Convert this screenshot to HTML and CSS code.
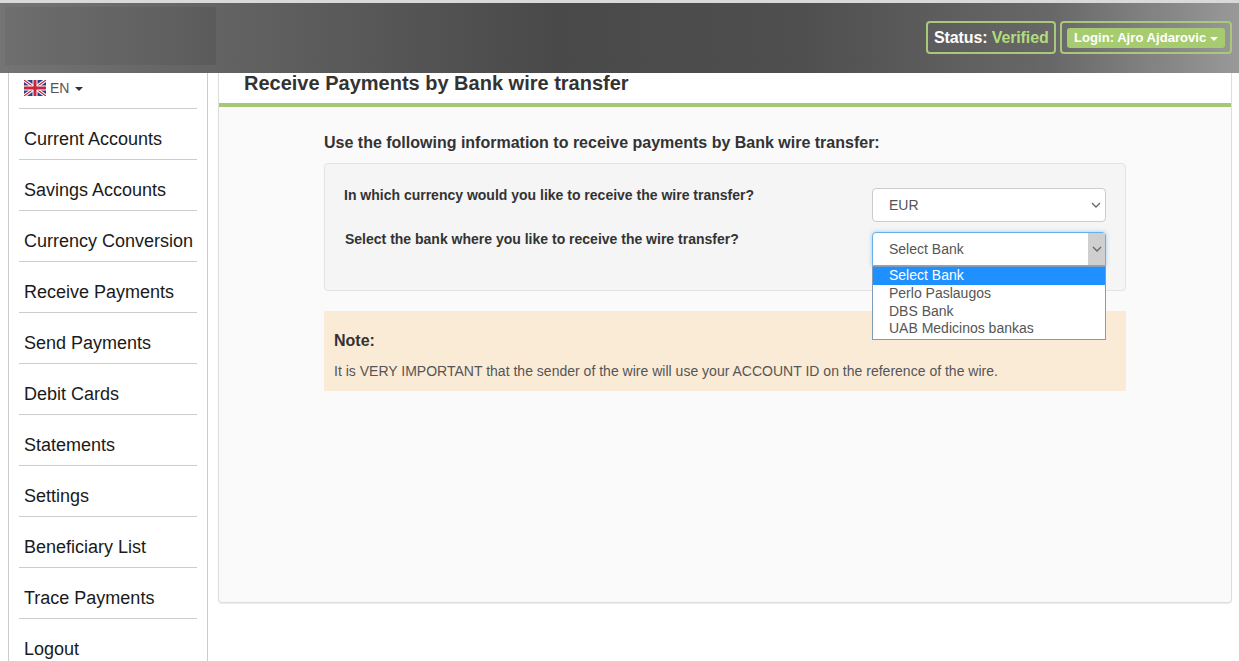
FILE: index.html
```html
<!DOCTYPE html>
<html lang="en">
<head>
<meta charset="utf-8">
<title>Receive Payments by Bank wire transfer</title>
<link rel="stylesheet" href="styles.css">
</head>
<body>
<header class="topbar">
  <div class="logo"></div>
  <div class="top-actions">
    <div class="status">Status: <span class="verified">Verified</span></div>
    <div class="login-box"><span class="login-btn">Login: Ajro Ajdarovic <i class="caret caret-white"></i></span></div>
  </div>
</header>
<div class="layout">
  <nav class="sidebar">
    <div class="lang">
      <svg class="flag" width="22" height="16" viewBox="0 0 22 16">
        <rect width="22" height="16" fill="#2b3f87"/>
        <path d="M0 0L22 16M22 0L0 16" stroke="#fff" stroke-width="3.4"/>
        <path d="M0 0L22 16M22 0L0 16" stroke="#c8253c" stroke-width="1.2"/>
        <path d="M11 0V16M0 8H22" stroke="#fff" stroke-width="5"/>
        <path d="M11 0V16M0 8H22" stroke="#c8253c" stroke-width="3"/>
      </svg>
      <span>EN</span><i class="caret"></i>
    </div>
    <a class="nav-item">Current Accounts</a>
    <a class="nav-item">Savings Accounts</a>
    <a class="nav-item">Currency Conversion</a>
    <a class="nav-item">Receive Payments</a>
    <a class="nav-item">Send Payments</a>
    <a class="nav-item">Debit Cards</a>
    <a class="nav-item">Statements</a>
    <a class="nav-item">Settings</a>
    <a class="nav-item">Beneficiary List</a>
    <a class="nav-item">Trace Payments</a>
    <a class="nav-item">Logout</a>
  </nav>
  <main class="panel">
    <h1 class="panel-title">Receive Payments by Bank wire transfer</h1>
    <div class="content">
      <h2 class="intro">Use the following information to receive payments by Bank wire transfer:</h2>
      <section class="well">
        <div class="form-row">
          <label class="row-label">In which currency would you like to receive the wire transfer?</label>
          <div class="select">EUR
            <svg class="chevron" width="10" height="6" viewBox="0 0 10 6"><path d="M1 1l4 4 4-4" fill="none" stroke="#666" stroke-width="1.3"/></svg>
          </div>
        </div>
        <div class="form-row form-row-bank">
          <label class="row-label row-label-bank">Select the bank where you like to receive the wire transfer?</label>
          <div class="select select-open">Select Bank
            <span class="arrow-zone"><svg width="10" height="6" viewBox="0 0 10 6"><path d="M1 1l4 4 4-4" fill="none" stroke="#666" stroke-width="1.3"/></svg></span>
            <ul class="dropdown">
              <li class="option option-active">Select Bank</li>
              <li class="option">Perlo Paslaugos</li>
              <li class="option">DBS Bank</li>
              <li class="option">UAB Medicinos bankas</li>
            </ul>
          </div>
        </div>
      </section>
      <section class="note">
        <h3 class="note-title">Note:</h3>
        <p class="note-text">It is VERY IMPORTANT that the sender of the wire will use your ACCOUNT ID on the reference of the wire.</p>
      </section>
    </div>
  </main>
</div>
</body>
</html>
```
FILE: styles.css
```css
* { box-sizing: border-box; }
html, body { margin: 0; height: 661px; overflow: hidden; background: #fff; }
body { font-family: "Liberation Sans", Arial, sans-serif; color: #333; position: relative; }

.topbar {
  position: absolute; top: 3px; left: 0; right: 0; height: 70px; z-index: 5;
  display: flex; justify-content: space-between; align-items: flex-start;
  background: linear-gradient(90deg, #707070 0%, #5c5c5c 20%, #444 45%, #4a4a4a 65%, #646464 85%, #969696 100%);
  box-shadow: 0 -3px 0 #d8d8d8;
  opacity: .97;
}
.logo { width: 211px; height: 58px; margin: 4px 0 0 5px; background: linear-gradient(90deg, #6a6a6a, #565656); }
.top-actions { display: flex; gap: 4px; margin: 18px 7px 0 0; }
.status {
  height: 33px; width: 130px; padding-left: 6px; border: 2px solid #a6c776; border-radius: 4px;
  font-size: 16px; font-weight: bold; line-height: 29px; color: #fff; white-space: nowrap; letter-spacing: -.12px;
}
.verified { color: #afdc78; }
.login-box { height: 33px; width: 172px; padding: 5px 5px; border: 2px solid #a6c776; border-radius: 4px; }
.login-btn {
  display: block; height: 20px; padding-left: 7px; border-radius: 3px; background: #a5cb6c;
  font-size: 13px; font-weight: bold; line-height: 20px; color: #fff; white-space: nowrap; letter-spacing: .05px;
}
.caret {
  display: inline-block; width: 0; height: 0; margin-left: 6px; vertical-align: middle;
  border-top: 4px solid #333; border-left: 4px solid transparent; border-right: 4px solid transparent;
}
.caret-white { border-top-color: #fff; margin-left: 0; }

.layout { display: flex; align-items: flex-start; padding-left: 8px; padding-top: 58px; height: 661px; }

.sidebar {
  width: 200px; height: 596px; flex: none; padding: 0 10px; margin: 7px 10px 0 0;
  background: #fff; border-left: 1px solid #ccc; border-right: 1px solid #ccc;
}
.lang {
  height: 44px; padding: 15px 0 0 5px; border-bottom: 1px solid #ccc;
  display: flex; align-items: flex-start; font-size: 14px; color: #555; line-height: 16px;
}
.flag { margin-right: 4px; flex: none; }
.lang .caret { margin: 7px 0 0 6px; }
.nav-item {
  display: block; height: 51px; padding: 19px 0 0 5px; border-bottom: 1px solid #ccc;
  font-size: 18px; line-height: 22px; color: #1a1a1a; white-space: nowrap;
}
.nav-item:last-child { border-bottom: 0; }

.panel {
  width: 1014px; height: 545px; background: #fafafa; border: 1px solid #ddd; border-radius: 4px;
  box-shadow: 0 1px 1px rgba(0,0,0,.08);
}
.panel-title {
  height: 48px; margin: 0; padding: 13px 0 0 25px; background: #fff; border-bottom: 4px solid #a6c776;
  font-size: 20px; font-weight: bold; line-height: 23px; color: #333;
}
.content { padding: 26px 105px 0; }
.intro { margin: 0 0 10px; font-size: 16px; font-weight: bold; line-height: 20px; color: #333; }
.well {
  height: 128px; padding: 24px 19px 0; background: #f5f5f5; border: 1px solid #e3e3e3; border-radius: 4px;
}
.form-row { display: flex; justify-content: space-between; align-items: flex-start; height: 44px; }
.row-label { font-size: 14px; font-weight: bold; line-height: 16px; color: #333; margin-top: -1px; }
.row-label-bank { margin: -1px 0 0 1px; }
.select {
  position: relative; flex: none; width: 234px; height: 34px; padding-left: 16px;
  background: #fff; border: 1px solid #ccc; border-radius: 4px;
  font-size: 14px; line-height: 32px; color: #555;
}
.chevron { position: absolute; right: 4px; top: 13px; }
.select-open { border-color: #66afe9; box-shadow: 0 0 4px rgba(102,175,233,.6); border-radius: 4px 4px 0 0; }
.arrow-zone {
  position: absolute; right: 0; top: 0; bottom: 0; width: 17px; background: #cfcfcf;
  display: flex; align-items: center; justify-content: center;
}
.dropdown {
  position: absolute; left: -1px; right: -1px; top: 33px; z-index: 3; margin: 0; padding: 0;
  list-style: none; background: #fff; border: 1px solid #7f9db9; height: 74px;
}
.option { height: 17.5px; padding-left: 16px; font-size: 14px; line-height: 17px; color: #555; }
.option-active { height: 18px; line-height: 17.5px; background: #1e90ff; color: #fff; }
.note { height: 80px; margin-top: 20px; padding: 21px 10px 0; background: #faebd7; }
.note-title { margin: 0; font-size: 16px; font-weight: bold; line-height: 18px; color: #333; }
.note-text { margin: 13px 0 0; font-size: 14px; line-height: 16px; color: #555; letter-spacing: .01px; }
```
